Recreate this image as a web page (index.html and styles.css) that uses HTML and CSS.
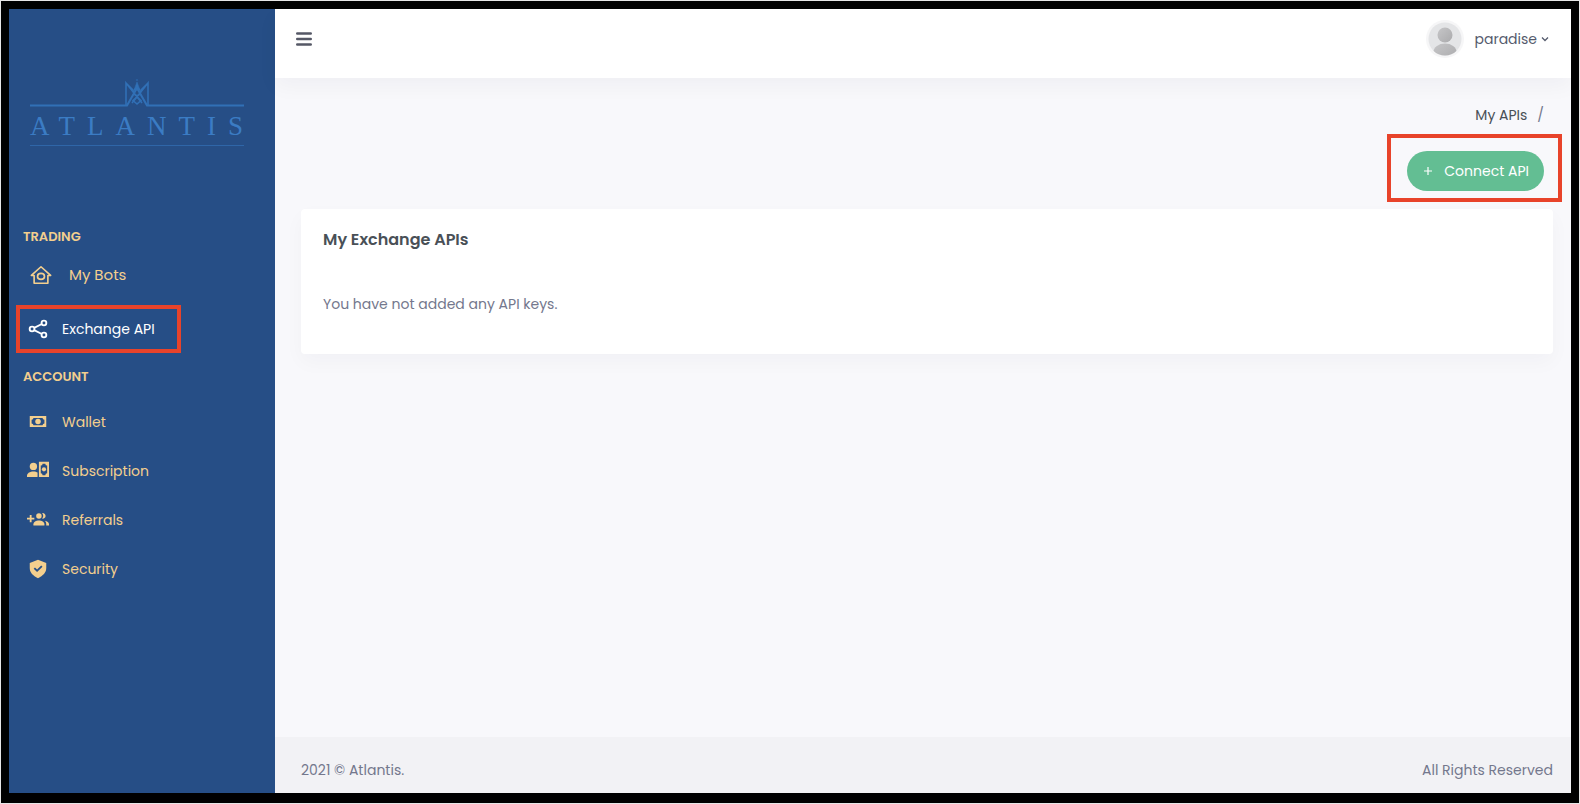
FILE: index.html
```html
<!DOCTYPE html>
<html lang="en">
<head>
    <meta charset="UTF-8">
    <meta name="viewport" content="width=device-width, initial-scale=1.0">
    <title>Atlantis - My APIs</title>
    <link rel="stylesheet" href="styles.css">
</head>
<body>

    <div class="frame">
        <aside class="sidebar">
            <a href="#" class="logo">
                <svg class="logo-crown" viewBox="0 0 214 30" fill="none" stroke="currentColor" stroke-width="2">
                    <path d="M0 26.500H97L107 9L117 26.500H214"/>
                    <path d="M96 26V4L112 24M118 26V4L102 24M96 4l7 7M118 4l-7 7" stroke-width="1.600"/>
                    <path d="M107 3l-3 8h6z" fill="currentColor" stroke-width="0.500"/>
                    <circle cx="107" cy="13" r="3.500" stroke-width="1.500"/>
                    <path d="M107 18l4 3.500l-4 3.500l-4-3.500z" stroke-width="1.500"/>
                    <circle cx="107" cy="1" r="0.800" stroke-width="0.500"/>
                </svg>
                <span class="logo-text">ATLANTIS</span>
            </a>

            <nav>
                <h2 class="menu-title">Trading</h2>
                <ul class="menu">
                    <li>
                        <a href="#" class="menu-link menu-link-bots">
                            <svg class="icon" viewBox="0 0 24 24" fill="none" stroke="currentColor" stroke-width="1.800" stroke-linejoin="round" stroke-linecap="round">
                                <path d="M4.500 12.500H1.500L12 3l10.500 9.500H19.500M4.500 12.500V21h15V12.500"/>
                                <ellipse cx="12" cy="13.500" rx="3.800" ry="3.200"/>
                            </svg>
                            <span>My Bots</span>
                        </a>
                    </li>
                    <li>
                        <a href="#" class="menu-link active highlight">
                            <svg class="icon" viewBox="0 0 24 24" fill="none" stroke="currentColor" stroke-width="2">
                                <circle cx="5.500" cy="12" r="2.600"/>
                                <circle cx="18.500" cy="5.500" r="2.600"/>
                                <circle cx="18.500" cy="18.500" r="2.600"/>
                                <path d="M7.800 10.800l8.400-4.200M7.800 13.200l8.400 4.200"/>
                            </svg>
                            <span>Exchange API</span>
                        </a>
                    </li>
                </ul>

                <h2 class="menu-title">Account</h2>
                <ul class="menu">
                    <li>
                        <a href="#" class="menu-link">
                            <svg class="icon" viewBox="0 0 24 24" fill="currentColor">
                                <path fill-rule="evenodd" d="M3 5.500h18v12H3zM7 7.500a2 2 0 0 1-2 2v4a2 2 0 0 1 2 2h10a2 2 0 0 1 2-2v-4a2 2 0 0 1-2-2z"/>
                                <circle cx="12" cy="11.500" r="3"/>
                            </svg>
                            <span>Wallet</span>
                        </a>
                    </li>
                    <li>
                        <a href="#" class="menu-link">
                            <svg class="icon" viewBox="0 0 24 24" fill="currentColor">
                                <circle cx="7" cy="7" r="4"/>
                                <path d="M0 18.500v-1.500c0-2.800 3.500-4.500 7-4.500 1.800 0 3.500.5 4.500 1.200v4.800z"/>
                                <path fill-rule="evenodd" d="M13 2h11v16.500H13zM17 4a2 2 0 0 1-2 2v8.500a2 2 0 0 1 2 2h3a2 2 0 0 1 2-2V6a2 2 0 0 1-2-2z"/>
                                <circle cx="18.500" cy="10.200" r="2.300"/>
                            </svg>
                            <span>Subscription</span>
                        </a>
                    </li>
                    <li>
                        <a href="#" class="menu-link">
                            <svg class="icon" viewBox="0 0 24 24" fill="currentColor">
                                <path d="M3 6.500h2v3h3v2H5v3H3v-3H0v-2h3z"/>
                                <circle cx="13" cy="7.500" r="3"/>
                                <path d="M7 18v-1.500c0-2.300 3-4 6-4s6 1.700 6 4V18z"/>
                                <path d="M16.500 4.600a3 3 0 1 1 0 5.800 4.500 4.500 0 0 0 0-5.800zM19.500 12.800c2.600.4 4.500 1.700 4.500 3.700V18h-3v-1.500c0-1.500-.5-2.800-1.500-3.700z"/>
                            </svg>
                            <span>Referrals</span>
                        </a>
                    </li>
                    <li>
                        <a href="#" class="menu-link">
                            <svg class="icon" viewBox="0 0 24 24" fill="currentColor">
                                <path fill-rule="evenodd" d="M12 2l9 3.500v5.500c0 5-3.500 8.500-9 11-5.500-2.500-9-6-9-11V5.500zM8.700 10.300l-1.400 1.400 3.700 3.700 5.900-5.900-1.400-1.400-4.500 4.500z"/>
                            </svg>
                            <span>Security</span>
                        </a>
                    </li>
                </ul>
            </nav>
        </aside>

        <div class="page">
            <header class="topbar">
                <button type="button" class="menu-toggle" aria-label="Toggle menu">
                    <svg viewBox="0 0 16 14" stroke="currentColor" stroke-width="2.600" stroke-linecap="round">
                        <path d="M1.300 1.500h13.400M1.300 7h13.400M1.300 12.500h13.400"/>
                    </svg>
                </button>
                <button type="button" class="user">
                    <svg class="avatar" viewBox="0 0 38 38">
                        <defs>
                            <linearGradient id="person" x1="0" y1="0" x2="1" y2="1">
                                <stop offset="0" stop-color="#c6c6c8"/>
                                <stop offset="1" stop-color="#aaaaac"/>
                            </linearGradient>
                            <clipPath id="round"><circle cx="19" cy="19" r="16.500"/></clipPath>
                        </defs>
                        <circle cx="19" cy="19" r="19" fill="#f6f6f7"/>
                        <circle cx="19" cy="19" r="16.500" fill="#e4e5e7"/>
                        <g clip-path="url(#round)" fill="url(#person)">
                            <circle cx="19" cy="15" r="7.500"/>
                            <ellipse cx="19" cy="32" rx="11.500" ry="8.500"/>
                        </g>
                    </svg>
                    <span>paradise</span>
                    <svg class="chevron" viewBox="0 0 8 6" fill="none" stroke="currentColor" stroke-width="1.300">
                        <path d="M1 1.500l3 3 3-3"/>
                    </svg>
                </button>
            </header>

            <main class="content">
                <div class="breadcrumb">
                    <a href="#">My APIs</a>
                    <span>/</span>
                </div>
                <div class="actions">
                    <div class="connect-box highlight">
                        <button type="button" class="connect">
                            <svg viewBox="0 0 10 10" stroke="currentColor" stroke-width="1.200">
                                <path d="M5 1v8M1 5h8"/>
                            </svg>
                            <span>Connect API</span>
                        </button>
                    </div>
                </div>
                <section class="card">
                    <h1>My Exchange APIs</h1>
                    <p>You have not added any API keys.</p>
                </section>
            </main>

            <footer class="footer">
                <span>2021 © Atlantis.</span>
                <span>All Rights Reserved</span>
            </footer>
        </div>
    </div>

</body>
</html>
```
FILE: styles.css
```css
* {
    box-sizing: border-box;
}

body {
    margin: 0;
    padding: 1px;
    background-color: #e6e6e6;
    font-family: Poppins, Inter, "Open Sans", sans-serif;
    font-size: 14px;
    line-height: 20px;
    color: #74788d;
}

a {
    color: inherit;
    text-decoration: none;
}

button {
    padding: 0;
    border: none;
    background: none;
    font: inherit;
    color: inherit;
    cursor: pointer;
}

.frame {
    display: flex;
    min-height: calc(100vh - 2px);
    border: 8px solid #000;
    border-bottom-width: 10px;
}

.highlight {
    border: 4px solid #e8432a;
}

/* sidebar */
.sidebar {
    flex: 0 0 266px;
    padding-top: 70px;
    background-color: #264e86;
    color: #f3cf8e;
}

.logo {
    display: block;
    width: 214px;
    margin: 0 0 67px 21px;
    border-bottom: 1px solid #2f66a8;
    color: #3b7cc4;
}

.logo-crown {
    display: block;
    width: 100%;
    height: 30px;
    color: #3170b6;
}

.logo-text {
    display: block;
    height: 36px;
    font-family: "Liberation Serif", serif;
    font-size: 27px;
    line-height: 34px;
    letter-spacing: 12px;
    white-space: nowrap;
}

.menu-title {
    margin: 0;
    padding: 14px 14px 10px;
    font-size: 13px;
    font-weight: 600;
    line-height: 20px;
    text-transform: uppercase;
}

.menu {
    margin: 0;
    padding: 0;
    list-style: none;
}

.menu-link {
    display: flex;
    align-items: center;
    gap: 13px;
    height: 49px;
    padding-left: 18px;
}

.menu-link-bots {
    gap: 17px;
    height: 36px;
    margin-bottom: 12px;
    padding-left: 21px;
    font-size: 15px;
}

.menu-link.active {
    width: 165px;
    height: 48px;
    margin-left: 7px;
    padding-left: 7px;
    color: #fff;
}

.icon {
    width: 22px;
    height: 22px;
}

/* right side */
.page {
    flex: 1;
    display: flex;
    flex-direction: column;
    min-width: 0;
    background-color: #f8f8fb;
}

.topbar {
    display: flex;
    justify-content: space-between;
    align-items: flex-start;
    height: 69px;
    padding: 11px 22px 0 21px;
    background-color: #fff;
    box-shadow: 0 8px 20px rgba(18, 38, 63, 0.04);
}

.menu-toggle {
    height: 38px;
    color: #555866;
}

.menu-toggle svg {
    display: block;
    width: 16px;
    height: 14px;
}

.user {
    display: flex;
    align-items: center;
    color: #555b6d;
}

.avatar {
    width: 38px;
    height: 38px;
    margin-right: 10px;
}

.chevron {
    width: 8px;
    height: 6px;
    margin-left: 4px;
}

.content {
    flex: 1;
    padding: 27px 18px 27px 26px;
}

.breadcrumb {
    display: flex;
    justify-content: flex-end;
    gap: 10px;
    margin: 0 9px 9px 0;
    color: #74788d;
}

.breadcrumb a {
    color: #495057;
}

.actions {
    display: flex;
    justify-content: flex-end;
    margin-right: -9px;
}

.connect-box {
    padding: 13px 14px 7px 16px;
}

.connect {
    display: flex;
    align-items: center;
    gap: 11px;
    height: 40px;
    padding: 0 15px 0 16px;
    border-radius: 20px;
    background-color: #63be93;
    color: #fff;
}

.connect svg {
    width: 10px;
    height: 10px;
}

.card {
    margin-top: 7px;
    padding: 21px 22px 40px;
    border-radius: 4px;
    background-color: #fff;
    box-shadow: 0 8px 20px rgba(18, 38, 63, 0.03);
}

.card h1 {
    margin: 0 0 44px;
    font-size: 16px;
    font-weight: 600;
    line-height: 20px;
    color: #495057;
}

.card p {
    margin: 0;
}

.footer {
    display: flex;
    justify-content: space-between;
    padding: 23px 18px 13px 26px;
    background-color: #f2f2f5;
}
```
